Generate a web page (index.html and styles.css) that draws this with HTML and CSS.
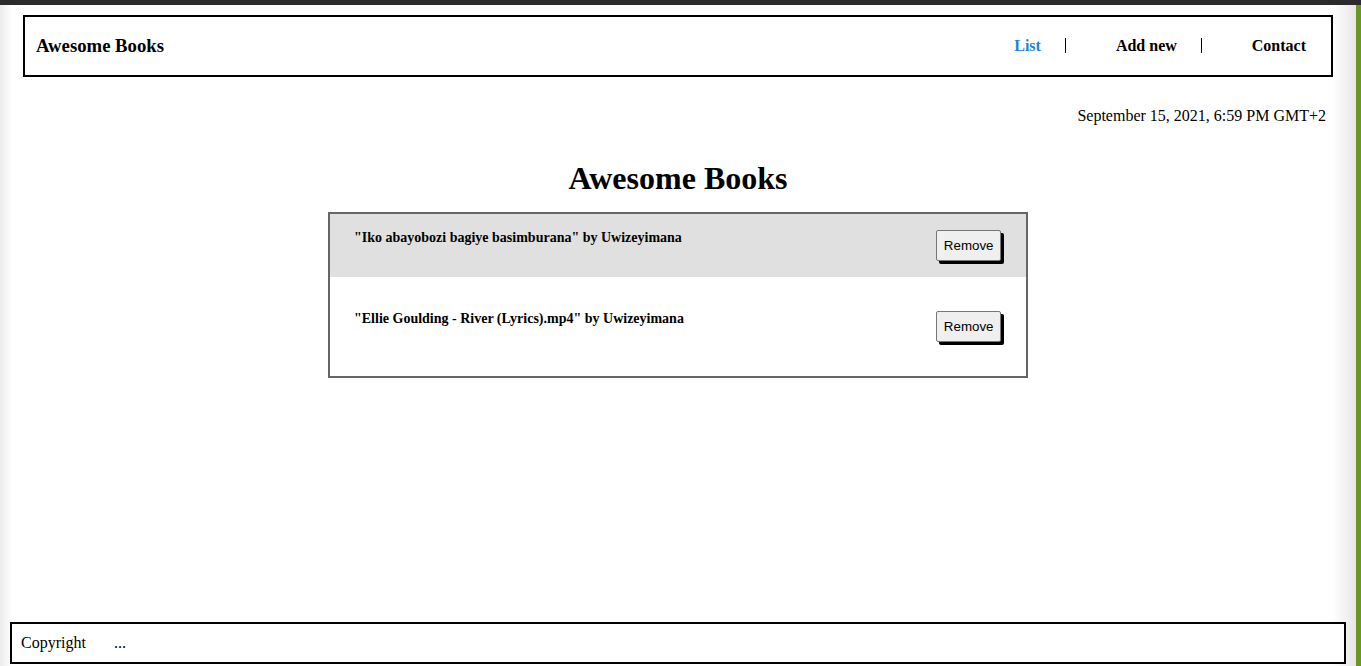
FILE: index.html
```html
<!DOCTYPE html>
<html lang="en">
<head>
<meta charset="utf-8">
<title>Awesome Books</title>
<link rel="stylesheet" href="styles.css">
</head>
<body>
<div class="page">
  <header class="site-header">
    <h3 class="brand">Awesome Books</h3>
    <nav>
      <ul class="nav-list">
        <li class="nav-item"><a class="nav-link active" href="#">List</a></li>
        <li class="nav-item"><a class="nav-link" href="#">Add new</a></li>
        <li class="nav-item last"><a class="nav-link" href="#">Contact</a></li>
      </ul>
    </nav>
  </header>
  <p class="date">September 15, 2021, 6:59 PM GMT+2</p>
  <h1 class="title">Awesome Books</h1>
  <section class="book-list">
    <div class="book shaded">
      <p class="book-text">"Iko abayobozi bagiye basimburana" by Uwizeyimana</p>
      <button class="remove-btn" type="button">Remove</button>
    </div>
    <div class="book spaced">
      <p class="book-text">"Ellie Goulding - River (Lyrics).mp4" by Uwizeyimana</p>
      <button class="remove-btn" type="button">Remove</button>
    </div>
  </section>
</div>
<footer class="site-footer">
  <span class="copy">Copyright</span>
  <span class="dots">...</span>
</footer>
</body>
</html>
```

FILE: styles.css
```css
* { box-sizing: border-box; }

html, body { height: 100%; }

body {
  margin: 0;
  font-family: "Liberation Serif", "Times New Roman", serif;
  color: #000;
  border-top: 5px solid #2b2b2b;
  display: flex;
  flex-direction: column;
  background:
    linear-gradient(to right, #6a981f, #6a981f) right top / 5px 100% no-repeat,
    linear-gradient(to right, #ebebeb 0, #ffffff 12px, #ffffff calc(100% - 28px), #e6e6e6 calc(100% - 5px), #e6e6e6 100%);
}

.page {
  flex: 1;
  padding: 10px 28px 0 23px;
}

.site-header {
  height: 62px;
  border: 2px solid #000;
  display: flex;
  align-items: center;
  justify-content: space-between;
  padding: 0 1px 0 11px;
}

.brand {
  margin: 0;
  font-size: 18.72px;
  font-weight: bold;
}

.nav-list {
  list-style: none;
  margin: 0 0 2px;
  padding: 0;
  display: flex;
  gap: 26px;
}

.nav-item {
  padding: 0 24px;
  line-height: 15px;
  border-right: 1px solid #000;
}

.nav-item.last { border-right: none; }

.nav-link {
  color: #000;
  text-decoration: none;
  font-weight: bold;
  font-size: 16px;
}

.nav-link.active { color: #1a85d8; }

.date {
  margin: 30px 7px 0 0;
  text-align: right;
  font-size: 16px;
  line-height: 18px;
}

.title {
  margin: 35px 0 15px;
  text-align: center;
  font-size: 32px;
  line-height: 37px;
}

.book-list {
  width: 700px;
  margin: 0 auto;
  border: 2px solid #666;
}

.book {
  display: flex;
  justify-content: space-between;
  align-items: flex-start;
  padding: 16px 25px 16px 24px;
}

.book.shaded { background: #e0e0e0; }

.book.spaced { padding: 34px 25px 34px 24px; }

.book-text {
  margin: 0;
  font-size: 14px;
  font-weight: bold;
  line-height: 16px;
}

.remove-btn {
  font-family: "Liberation Sans", Arial, sans-serif;
  font-size: 13.33px;
  line-height: 15px;
  padding: 7px 6.5px;
  background: #efefef;
  border: 1px solid #767676;
  border-radius: 2px;
  box-shadow: 3px 3px 0 #000;
  color: #000;
}

.site-footer {
  margin: 0 15px 2px 10px;
  height: 42px;
  border: 2px solid #000;
  display: flex;
  align-items: center;
  padding: 0 9px;
  font-size: 16px;
  background: #fff;
}

.copy { margin-right: 28px; }
```
